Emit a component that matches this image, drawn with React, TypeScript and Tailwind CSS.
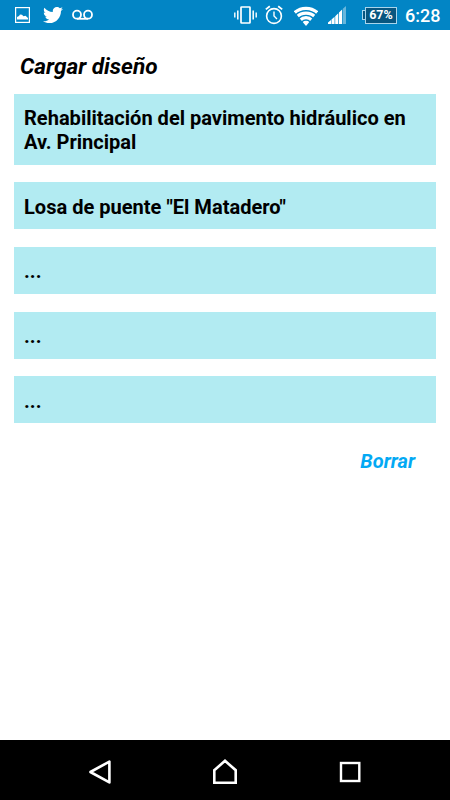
import { FaTwitter } from "react-icons/fa";

const designs = [
  "Rehabilitación del pavimento hidráulico en Av. Principal",
  'Losa de puente "El Matadero"',
  "...",
  "...",
  "...",
];

export default function App() {
  return (
    <div className="flex h-[800px] w-[450px] flex-col overflow-hidden bg-white font-['Roboto',sans-serif]">
      <StatusBar />
      <main className="flex-1 px-[14px] pt-[23px]">
        <h1 className="pl-[6px] text-[22.6px] leading-[28px] font-bold text-black italic">Cargar diseño</h1>
        <ul className="mt-[13px] flex flex-col gap-[17.7px]">
          {designs.map((d, i) => (
            <DesignItem key={i} title={d} />
          ))}
        </ul>
        <div className="mt-[26px] flex justify-end pr-[21px]">
          <button className="text-[20px] leading-[24px] font-bold text-[#03a9f4] italic">Borrar</button>
        </div>
      </main>
      <NavBar />
    </div>
  );
}

function DesignItem({ title }: { title: string }) {
  return (
    <li className="bg-[#b2ebf2] pt-[13.4px] pr-[8px] pb-[9.9px] pl-[10px] text-[20.06px] leading-[23.7px] font-bold text-black">
      {title}
    </li>
  );
}

function StatusBar() {
  return (
    <header className="flex h-[30px] items-center justify-between bg-[#0285c5] pr-[10px] pl-[15px] text-white">
      <div className="flex items-center">
        <svg width="15" height="16" viewBox="0 0 15 16">
          <rect x="0.6" y="0.6" width="13.8" height="14.8" fill="none" stroke="currentColor" strokeWidth="1.2" />
          <path d="M2 12.5V10l2-1 1-1.5 2 .2 1.5 1.6 2-.6L13 11v1.5z" fill="currentColor" />
        </svg>
        <FaTwitter className="ml-[13px] h-[20px] w-[20px]" />
        <svg className="ml-[9px]" width="21" height="12" viewBox="0 0 21 12" fill="none" stroke="currentColor" strokeWidth="1.8">
          <circle cx="5" cy="5.7" r="4" />
          <circle cx="16" cy="5.7" r="4" />
          <path d="M5 9.8h11" />
        </svg>
      </div>
      <div className="flex items-center">
        <svg width="23" height="18" viewBox="0 0 23 18" fill="none" stroke="currentColor">
          <rect x="7" y="1" width="9" height="16" rx="0.6" strokeWidth="1.7" />
          <path d="M3.8 4.5v9M19.2 4.5v9" strokeWidth="1.5" />
          <path d="M.8 6.5v5M22.2 6.5v5" strokeWidth="1.4" />
        </svg>
        <svg className="ml-[8px]" width="18" height="20" viewBox="0 0 18 20" fill="none" stroke="currentColor">
          <circle cx="9" cy="11" r="7.4" strokeWidth="1.6" />
          <path d="M9 6.5V11l3 3" strokeWidth="1.4" />
          <path d="M.8 4.4 4.8 1.2M17.2 4.4l-4-3.2" strokeWidth="1.8" />
        </svg>
        <WifiIcon />
        <svg className="ml-[10px]" width="18" height="18" viewBox="0 0 18 18" fill="currentColor">
          <path d="M0 18v-1.5L3 14v4zM3.5 13.4 6.6 10.8V18H3.5zM7.2 10.2l3.1-3V18H7.2zM11 6.4l3.1-3V18H11z" />
          <path d="M14.8 2.8 18 0v18h-3.2z" opacity="0.4" />
        </svg>
        <div className="ml-[16px] flex items-center">
          <span className="h-[10px] w-[3px] border border-r-0 border-[#a9d5ec] bg-[#085680]" />
          <span className="flex h-[17px] w-[32px] items-center justify-center border border-[#a9d5ec] bg-[#085680] text-[12.5px] leading-none font-bold">
            67%
          </span>
        </div>
        <span className="ml-[8px] w-[35px] pt-px text-[18px] leading-[20px] font-medium whitespace-nowrap">6:28</span>
      </div>
    </header>
  );
}

function WifiIcon() {
  return (
    <svg className="mt-[2px] ml-[11px]" width="24" height="20" viewBox="0 0 24 20" fill="none" stroke="currentColor">
      <clipPath id="wifi-cone">
        <path d="M12 20-4.5 0h33z" />
      </clipPath>
      <g clipPath="url(#wifi-cone)" strokeWidth="3.3">
        <circle cx="12" cy="19.8" r="17.4" />
        <circle cx="12" cy="19.8" r="12.7" />
        <circle cx="12" cy="19.8" r="8.1" />
        <circle cx="12" cy="19.8" r="5" fill="currentColor" stroke="none" />
      </g>
    </svg>
  );
}

function NavBar() {
  return (
    <nav className="flex h-[60px] justify-center bg-black pt-[3px] text-white">
      <button className="flex w-[125px] items-center justify-center">
        <svg width="24" height="26" viewBox="0 0 24 26" fill="none" stroke="currentColor" strokeWidth="2.6" strokeLinejoin="round">
          <path d="M21.4 2.6v20.8L2.4 13z" />
        </svg>
      </button>
      <button className="flex w-[125px] items-center justify-center">
        <svg width="24" height="26" viewBox="0 0 24 26" fill="none" stroke="currentColor" strokeWidth="2.6">
          <path d="M1.3 11.2 12 1.8l10.7 9.4v12.5H1.3z" />
        </svg>
      </button>
      <button className="flex w-[125px] items-center justify-center">
        <svg width="22" height="22" viewBox="0 0 22 22" fill="none" stroke="currentColor" strokeWidth="2.4">
          <rect x="2" y="2" width="18.3" height="18" />
        </svg>
      </button>
    </nav>
  );
}
